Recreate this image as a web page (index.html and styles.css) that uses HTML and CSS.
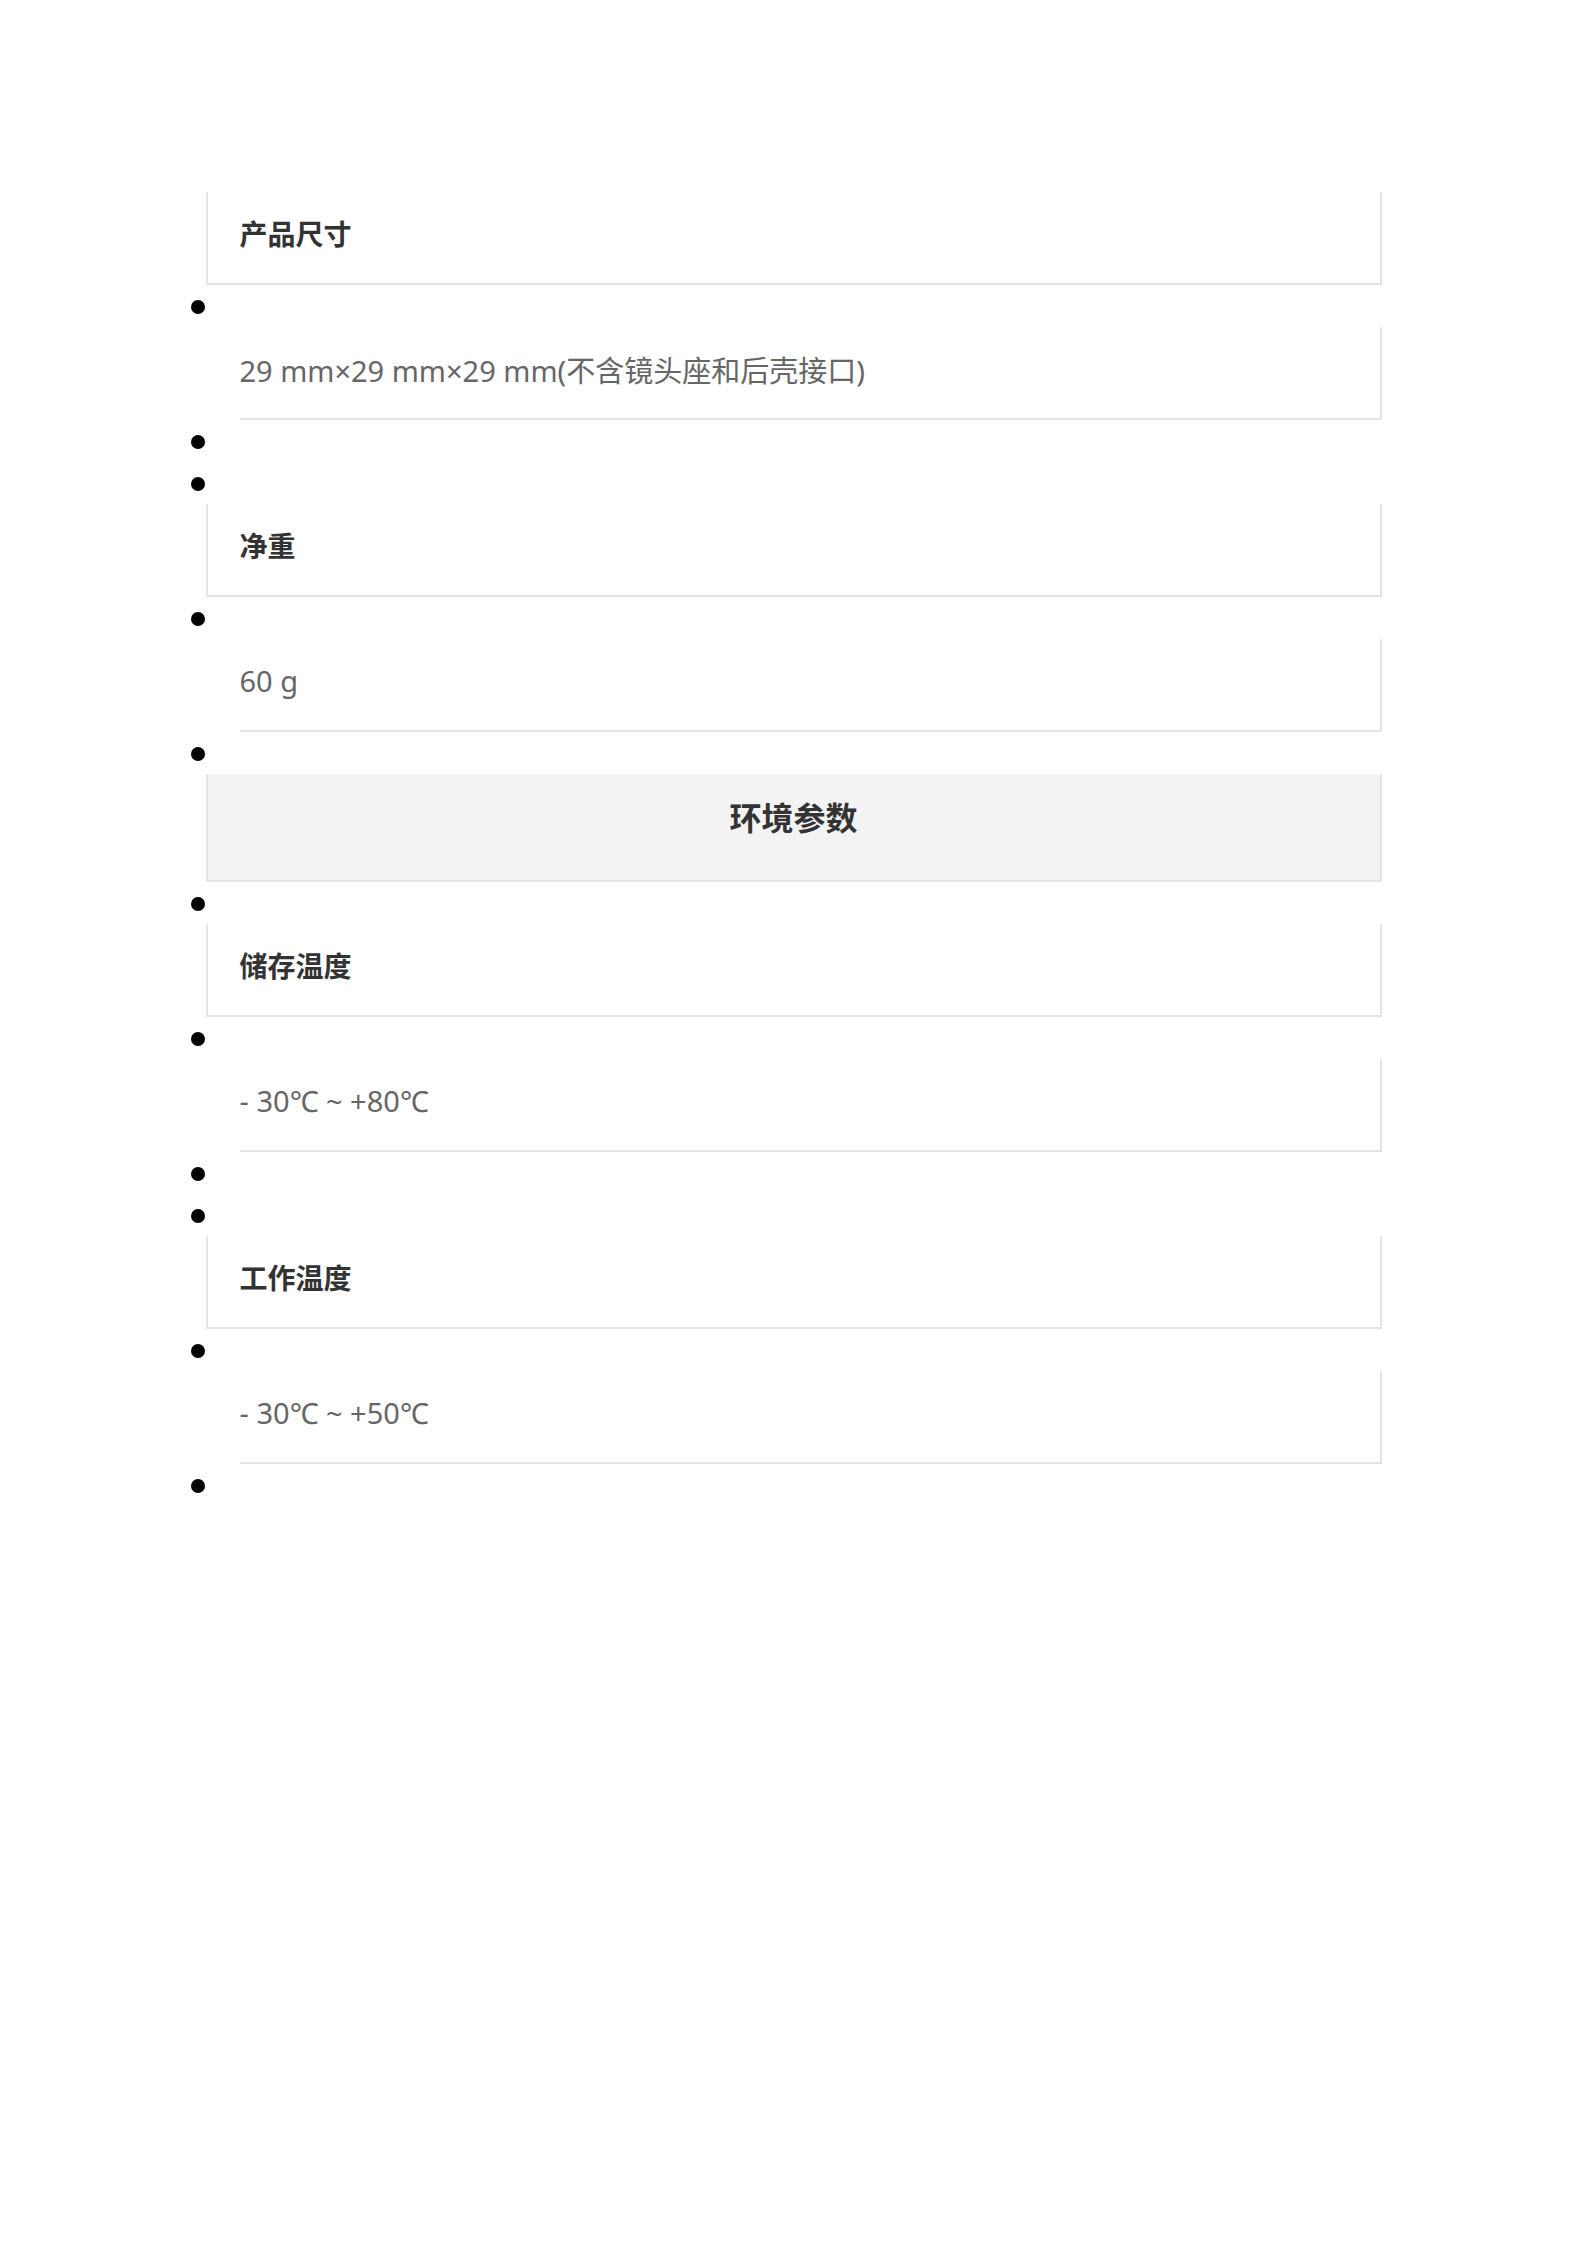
FILE: index.html
```html
<!DOCTYPE html>
<html lang="zh-CN">
  <head>
    <meta charset="UTF-8" />
    <meta name="viewport" content="width=device-width, initial-scale=1.0" />
    <link rel="stylesheet" href="styles.css">
  </head>
  <body>
    <ul class="spec-list">
      <li class="spec-name">产品尺寸</li>
      <li class="dot"></li>
      <li class="spec-value">29 mm×29 mm×29 mm(不含镜头座和后壳接口)</li>
      <li class="dot"></li>
      <li class="dot"></li>
      <li class="spec-name">净重</li>
      <li class="dot"></li>
      <li class="spec-value">60 g</li>
      <li class="dot"></li>
      <li class="spec-title">环境参数</li>
      <li class="dot"></li>
      <li class="spec-name">储存温度</li>
      <li class="dot"></li>
      <li class="spec-value">- 30℃ ~ +80℃</li>
      <li class="dot"></li>
      <li class="dot"></li>
      <li class="spec-name">工作温度</li>
      <li class="dot"></li>
      <li class="spec-value">- 30℃ ~ +50℃</li>
      <li class="dot"></li>
    </ul>
  </body>
</html>
```

FILE: styles.css
```css
body {
  margin: 8px;
  background-color: #ffffff;
  font-family: "Noto Sans", "Noto Sans CJK SC", sans-serif;
}

.spec-list {
  width: 1176px;
  margin: 184px auto 0;
  padding: 0;
  list-style: disc;
  font-size: 28px;
}

.spec-list li {
  box-sizing: border-box;
}

.dot {
  height: 42px;
  line-height: 42px;
  margin-left: 20px;
  font-size: 39px;
  color: #000000;
}

.spec-name {
  list-style: none;
  display: flex;
  align-items: center;
  height: 93px;
  padding-left: 32px;
  padding-bottom: 9px;
  border: 2px solid #e4e4e4;
  border-top: none;
  font-weight: bold;
  color: #333333;
}

.spec-value {
  list-style: none;
  display: flex;
  align-items: center;
  height: 93px;
  padding-bottom: 8px;
  margin-left: 34px;
  border-right: 2px solid #e4e4e4;
  border-bottom: 2px solid #e4e4e4;
  font-size: 29px;
  color: #666666;
}

.spec-title {
  list-style: none;
  display: flex;
  align-items: center;
  justify-content: center;
  height: 108px;
  padding-bottom: 22px;
  border: 2px solid #e4e4e4;
  border-top: none;
  background-color: #f3f3f3;
  font-size: 32px;
  font-weight: bold;
  color: #333333;
}
```
